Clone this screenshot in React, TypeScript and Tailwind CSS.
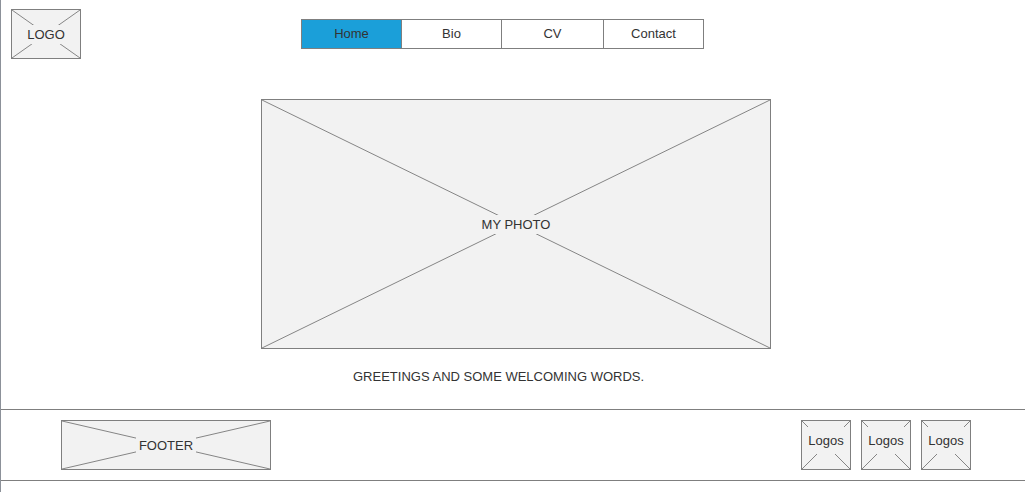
import React from "react";

function Placeholder({ label, className, textClass = "" }: { label: string; className: string; textClass?: string }) {
  return (
    <div className={`relative flex items-center justify-center border border-[#7f7f7f] bg-[#f2f2f2] ${className}`}>
      <svg className="absolute inset-0 h-full w-full" preserveAspectRatio="none" viewBox="0 0 100 100">
        <line x1="0" y1="0" x2="100" y2="100" stroke="#858585" strokeWidth="1" vectorEffect="non-scaling-stroke" />
        <line x1="100" y1="0" x2="0" y2="100" stroke="#858585" strokeWidth="1" vectorEffect="non-scaling-stroke" />
      </svg>
      <span className={`relative bg-[#f2f2f2] px-[3px] py-[2px] leading-[15px] ${textClass}`}>{label}</span>
    </div>
  );
}

const NAV = [
  { label: "Home", w: "w-[99px]", active: true },
  { label: "Bio", w: "w-[100px]", active: false },
  { label: "CV", w: "w-[102px]", active: false },
  { label: "Contact", w: "w-[100px]", active: false },
];

export default function App() {
  return (
    <div className="h-[492px] w-[1030px] overflow-hidden bg-white font-['Liberation_Sans',Arial,sans-serif] text-[13px] text-[#333]">
      <div className="h-full w-[1025px] border-l border-[#8c9199]">
        {/* header */}
        <div className="flex h-[99px] items-start pl-[10px] pt-[9px]">
          <Placeholder label="LOGO" className="h-[50px] w-[70px]" />
          <nav className="ml-[220px] mt-[10px] flex h-[30px] border border-[#7f7f7f]">
            {NAV.map((n, i) => (
              <div
                key={n.label}
                className={`flex items-center justify-center ${n.w} ${i > 0 ? "border-l border-[#7f7f7f]" : ""} ${
                  n.active ? "bg-[#1b9fd9]" : "bg-white"
                }`}
              >
                {n.label}
              </div>
            ))}
          </nav>
        </div>

        {/* main */}
        <div className="h-[310px]">
          <Placeholder label="MY PHOTO" className="ml-[260px] h-[250px] w-[510px]" />
          <p className="mt-[20px] pl-[352px] leading-[15px]">GREETINGS AND SOME WELCOMING WORDS.</p>
        </div>

        {/* footer */}
        <div className="flex border-y border-[#7f7f7f] py-[10px]">
          <Placeholder label="FOOTER" className="ml-[60px] h-[50px] w-[210px]" />
          <div className="ml-auto mr-[54px] flex gap-[10px]">
            <Placeholder label="Logos" className="h-[50px] w-[50px]" textClass="-mt-[10px] py-[6px]" />
            <Placeholder label="Logos" className="h-[50px] w-[50px]" textClass="-mt-[10px] py-[6px]" />
            <Placeholder label="Logos" className="h-[50px] w-[50px]" textClass="-mt-[10px] py-[6px]" />
          </div>
        </div>
      </div>
    </div>
  );
}
